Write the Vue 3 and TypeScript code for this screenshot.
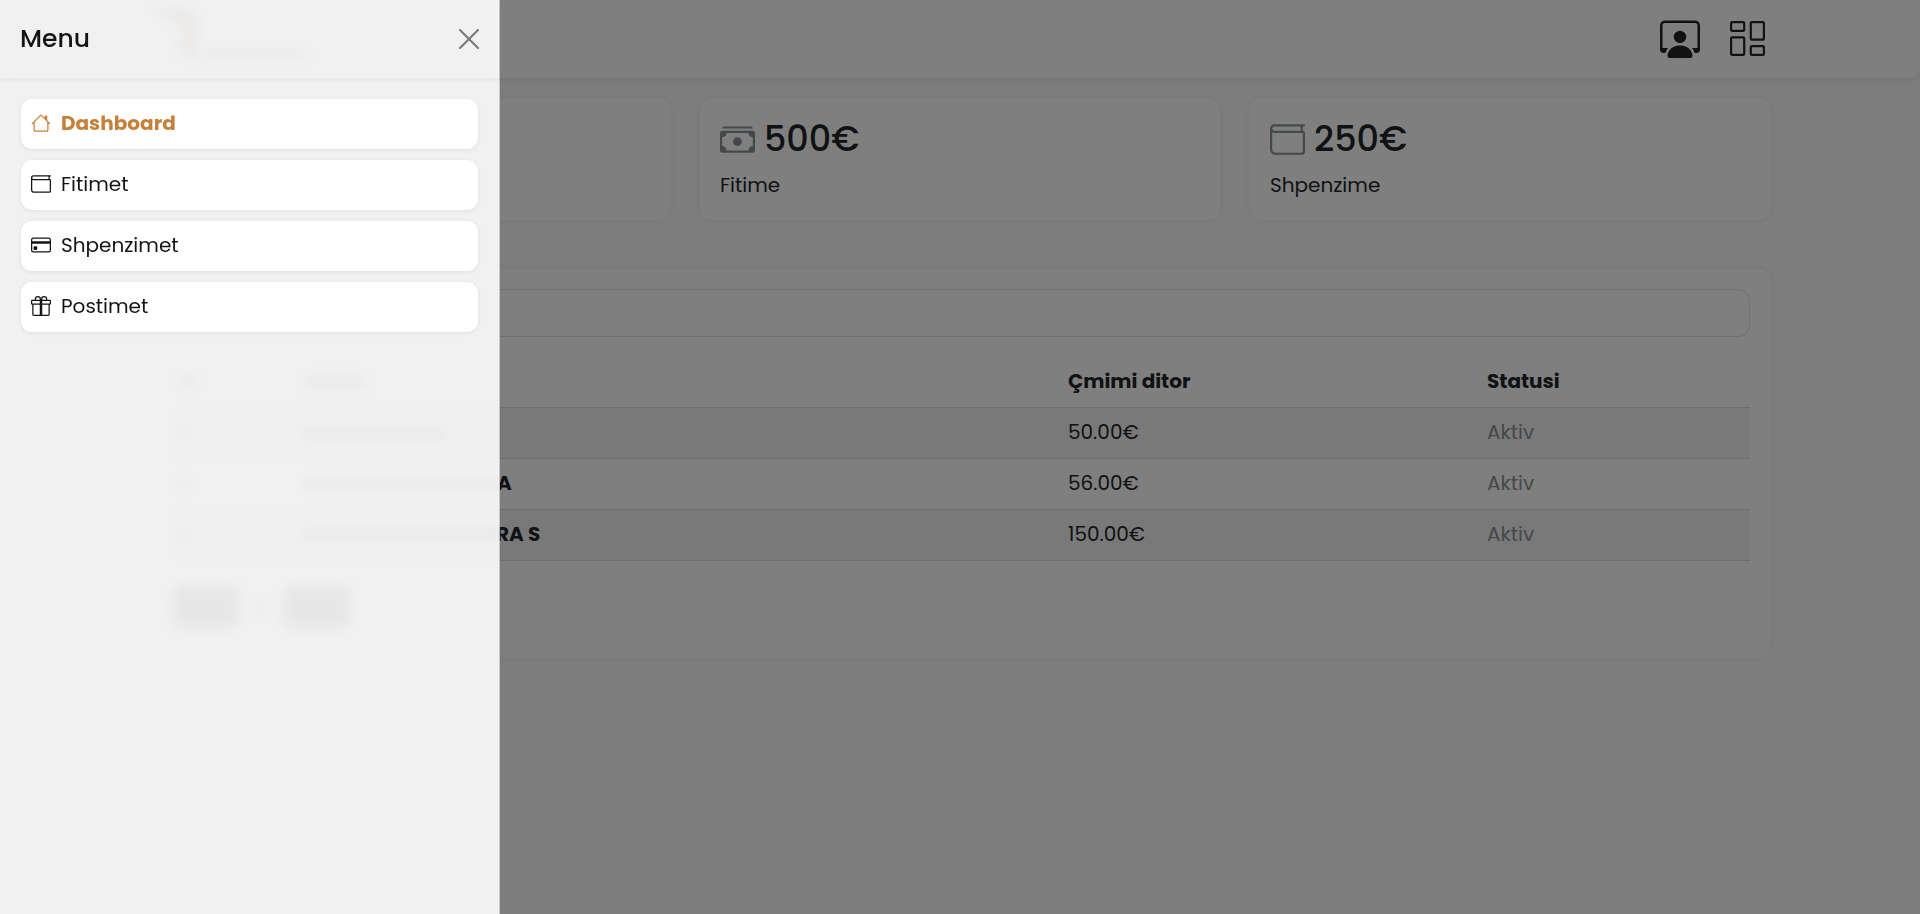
<script setup lang="ts">
import { ref } from 'vue'

interface Icon { paths: string[] }
interface MenuItem { label: string; icon: Icon; active?: boolean }
interface Stat { value: string; label: string; icon: Icon }
interface Row { id: number; bar: string; name: string; price: string; status: string }

const house: Icon = { paths: ['M8.707 1.5a1 1 0 0 0-1.414 0L.646 8.146a.5.5 0 0 0 .708.708L2 8.207V13.5A1.5 1.5 0 0 0 3.5 15h9a1.5 1.5 0 0 0 1.5-1.5V8.207l.646.647a.5.5 0 0 0 .708-.708L13 5.793V2.5a.5.5 0 0 0-.5-.5h-1a.5.5 0 0 0-.5.5v1.293L8.707 1.5ZM13 7.207V13.5a.5.5 0 0 1-.5.5h-9a.5.5 0 0 1-.5-.5V7.207l5-5 5 5Z'] }
const wallet: Icon = { paths: ['M0 3a2 2 0 0 1 2-2h13.5a.5.5 0 0 1 0 1H15v2a1 1 0 0 1 1 1v8.5a1.5 1.5 0 0 1-1.5 1.5h-12A2.5 2.5 0 0 1 0 12.5V3zm1 1.732V12.5A1.5 1.5 0 0 0 2.5 14h12a.5.5 0 0 0 .5-.5V5H2a1.99 1.99 0 0 1-1-.268zM1 3a1 1 0 0 0 1 1h12V2H2a1 1 0 0 0-1 1z'] }
const card: Icon = { paths: ['M0 4a2 2 0 0 1 2-2h12a2 2 0 0 1 2 2v8a2 2 0 0 1-2 2H2a2 2 0 0 1-2-2V4zm2-1a1 1 0 0 0-1 1v1h14V4a1 1 0 0 0-1-1H2zm13 4H1v5a1 1 0 0 0 1 1h12a1 1 0 0 0 1-1V7z', 'M2 10a1 1 0 0 1 1-1h1a1 1 0 0 1 1 1v1a1 1 0 0 1-1 1H3a1 1 0 0 1-1-1v-1z'] }
const gift: Icon = { paths: ['M3 2.5a2.5 2.5 0 0 1 5 0 2.5 2.5 0 0 1 5 0v.006c0 .07 0 .27-.038.494H15a1 1 0 0 1 1 1v2a1 1 0 0 1-1 1v7.5a1.5 1.5 0 0 1-1.5 1.5h-11A1.5 1.5 0 0 1 1 14.5V7a1 1 0 0 1-1-1V4a1 1 0 0 1 1-1h2.038A2.968 2.968 0 0 1 3 2.506V2.5zm1.068.5H7v-.5a1.5 1.5 0 1 0-3 0c0 .085.002.274.045.43a.522.522 0 0 0 .023.07zM9 3h2.932a.56.56 0 0 0 .023-.07c.043-.156.045-.345.045-.43a1.5 1.5 0 0 0-3 0V3zM1 4v2h6V4H1zm8 0v2h6V4H9zm5 3H9v8h4.5a.5.5 0 0 0 .5-.5V7zm-7 8V7H2v7.5a.5.5 0 0 0 .5.5H7z'] }
const cash: Icon = { paths: ['M1 3a1 1 0 0 1 1-1h12a1 1 0 0 1 1 1H1zm7 8a2 2 0 1 0 0-4 2 2 0 0 0 0 4z', 'M0 5a1 1 0 0 1 1-1h14a1 1 0 0 1 1 1v8a1 1 0 0 1-1 1H1a1 1 0 0 1-1-1V5zm3 0a2 2 0 0 1-2 2v4a2 2 0 0 1 2 2h10a2 2 0 0 1 2-2V7a2 2 0 0 1-2-2H3z'] }

const menu: MenuItem[] = [
  { label: 'Dashboard', icon: house, active: true },
  { label: 'Fitimet', icon: wallet },
  { label: 'Shpenzimet', icon: card },
  { label: 'Postimet', icon: gift },
]
const stats: Stat[] = [
  { value: '', label: '', icon: { paths: [] } },
  { value: '500€', label: 'Fitime', icon: cash },
  { value: '250€', label: 'Shpenzime', icon: wallet },
]
const rows: Row[] = [
  { id: 1, bar: '144px', name: '', price: '50.00€', status: 'Aktiv' },
  { id: 2, bar: '194px', name: 'A', price: '56.00€', status: 'Aktiv' },
  { id: 3, bar: '193px', name: 'RA S', price: '150.00€', status: 'Aktiv' },
]
const search = ref('')
</script>

<template>
  <div class="page">
    <header class="topbar">
      <div class="container topbar-inner">
        <svg class="logo" viewBox="0 0 160 60" aria-hidden="true">
          <path d="M0 0h36q16 10 12 30l-4 26-16-14 6-22z" />
          <path d="M52 42h104v10H52z" />
        </svg>
        <div class="actions">
          <button type="button" aria-label="Llogaria">
            <svg class="i40" viewBox="0 0 16 16">
              <path d="M4 16s-1 0-1-1 1-4 5-4 5 3 5 4-1 1-1 1H4Zm4-5.950a2.500 2.500 0 1 0 0-5 2.500 2.500 0 0 0 0 5Z" />
              <path d="M2 1a2 2 0 0 0-2 2v9.500A1.500 1.500 0 0 0 1.500 14h.653a5.373 5.373 0 0 1 1.066-2H1V3a1 1 0 0 1 1-1h12a1 1 0 0 1 1 1v9h-2.219c.554.654.89 1.373 1.066 2h.653a1.500 1.500 0 0 0 1.500-1.500V3a2 2 0 0 0-2-2H2Z" />
            </svg>
          </button>
          <button type="button" aria-label="Menu">
            <svg class="i35" viewBox="0 0 16 16">
              <path d="M6 1v3H1V1h5zM1 0a1 1 0 0 0-1 1v3a1 1 0 0 0 1 1h5a1 1 0 0 0 1-1V1a1 1 0 0 0-1-1H1zm14 12v3h-5v-3h5zm-5-1a1 1 0 0 0-1 1v3a1 1 0 0 0 1 1h5a1 1 0 0 0 1-1v-3a1 1 0 0 0-1-1h-5zM6 8v7H1V8h5zM1 7a1 1 0 0 0-1 1v7a1 1 0 0 0 1 1h5a1 1 0 0 0 1-1V8a1 1 0 0 0-1-1H1zm14-6v7h-5V1h5zm-5-1a1 1 0 0 0-1 1v7a1 1 0 0 0 1 1h5a1 1 0 0 0 1-1V1a1 1 0 0 0-1-1h-5z" />
            </svg>
          </button>
        </div>
      </div>
    </header>

    <main class="container">
      <section class="stats">
        <article v-for="(s, i) in stats" :key="i" class="panel stat">
          <div v-if="s.value" class="stat-top">
            <svg class="i35 muted" viewBox="0 0 16 16"><path v-for="p in s.icon.paths" :key="p" :d="p" /></svg>
            <span class="stat-value">{{ s.value }}</span>
          </div>
          <div class="stat-label">{{ s.label }}</div>
        </article>
      </section>

      <section class="panel listing">
        <input v-model="search" class="search" type="text" aria-label="Search" />
        <table>
          <colgroup><col class="c-id" /><col class="c-name" /><col class="c-price" /><col class="c-status" /></colgroup>
          <thead>
            <tr>
              <th scope="col"><span class="bar bar-id"></span></th>
              <th scope="col"><span class="bar bar-head"></span></th>
              <th scope="col">Çmimi ditor</th>
              <th scope="col">Statusi</th>
            </tr>
          </thead>
          <tbody>
            <tr v-for="r in rows" :key="r.id">
              <td><span class="bar bar-num"></span></td>
              <td class="name"><span class="bar" :style="{ width: r.bar }"></span>{{ r.name }}</td>
              <td>{{ r.price }}</td>
              <td class="status">{{ r.status }}</td>
            </tr>
          </tbody>
        </table>
        <nav class="pager" aria-label="Pages">
          <button type="button" aria-label="Previous page"></button>
          <span class="bar bar-num"></span>
          <button type="button" aria-label="Next page"></button>
        </nav>
      </section>
    </main>

    <div class="backdrop"></div>

    <aside class="drawer" role="dialog" aria-labelledby="drawer-title">
      <div class="drawer-head">
        <h5 id="drawer-title">Menu</h5>
        <button type="button" class="close" aria-label="Close">
          <svg viewBox="0 0 20 20"><path d="M1 1l18 18M19 1L1 19" /></svg>
        </button>
      </div>
      <nav class="drawer-body">
        <a v-for="m in menu" :key="m.label" href="#" class="item" :class="{ active: m.active }">
          <svg class="i20" viewBox="0 0 16 16"><path v-for="p in m.icon.paths" :key="p" :d="p" /></svg>
          <span>{{ m.label }}</span>
        </a>
      </nav>
    </aside>
  </div>
</template>

<style>
body { margin: 0; }
</style>

<style scoped>
* { box-sizing: border-box; }
.page {
  min-height: 100vh;
  background: #fafafa;
  color: #212529;
  font-family: Poppins, Inter, "Open Sans", sans-serif;
  font-size: 20px;
  line-height: 30px;
}
svg { display: block; fill: currentColor; }
button { padding: 0; border: 0; background: none; color: inherit; font: inherit; }
.container { width: 100%; max-width: 1650px; margin: 0 auto; padding: 0 15px; }
.topbar { background: #fff; border-radius: 0 0 10px 10px; box-shadow: 0 2px 5px rgba(0, 0, 0, 0.08); }
.topbar-inner { display: flex; align-items: center; justify-content: space-between; height: 78px; padding-bottom: 2px; }
.logo { width: 160px; height: 60px; fill: #a58468; }
.actions { display: flex; align-items: center; gap: 30px; padding-right: 5px; }
.i40 { width: 40px; height: 40px; }
.i35 { width: 35px; height: 35px; }
.i20 { width: 20px; height: 20px; }
.muted { color: #869197; }
.panel { background: #fff; border-radius: 12px; box-shadow: 0 0 6px rgba(0, 0, 0, 0.06); }
.stats { display: grid; grid-template-columns: repeat(3, 1fr); gap: 30px; margin-top: 20px; }
.stat { min-height: 122px; padding: 20px; }
.stat-top { display: flex; align-items: center; gap: 9px; height: 42px; margin-bottom: 10px; }
.stat-value { font-size: 35px; font-weight: 500; line-height: 42px; }
.listing { margin-top: 49px; padding: 20px 20px 30px; }
.search { display: block; width: 100%; height: 48px; padding: 0 15px; border: 1px solid #dee2e6; border-radius: 12px; background: #fff; font: inherit; }
table { width: 100%; margin-top: 19px; border-collapse: collapse; table-layout: fixed; }
.c-id { width: 123px; }
.c-name { width: 765px; }
.c-price { width: 419px; }
th, td { height: 51px; padding: 10px; border-bottom: 1px solid #d8dcdf; text-align: left; white-space: nowrap; }
th { font-weight: 700; }
td { padding: 9px 10px 11px; font-weight: 400; }
tbody tr:nth-child(odd) { background: #f2f2f2; }
.name { font-weight: 700; }
.status { color: #869197; }
.bar { display: inline-block; height: 12px; background: #858583; }
.bar-id { width: 18px; }
.bar-head { width: 64px; }
.bar-num { width: 9px; }
.pager { display: flex; align-items: center; gap: 18px; margin-top: 25px; padding-left: 3px; }
.pager button { width: 66px; height: 42px; border-radius: 8px; background: #4b4f52; }
.backdrop { position: fixed; inset: 0; background: rgba(0, 0, 0, 0.5); }
.drawer {
  position: fixed;
  inset: 0 auto 0 0;
  width: 500px;
  max-width: 100%;
  border-right: 1px solid rgba(0, 0, 0, 0.175);
  background: rgba(255, 255, 255, 0.89);
  backdrop-filter: blur(6px);
  color: #141414;
}
.drawer-head { display: flex; align-items: center; justify-content: space-between; height: 78px; padding: 0 20px; box-shadow: 0 2px 4px rgba(0, 0, 0, 0.06); }
h5 { margin: 0; font-size: 25px; font-weight: 500; }
.close svg { width: 20px; height: 20px; fill: none; stroke: #777; stroke-width: 2; stroke-linecap: round; }
.drawer-body { display: flex; flex-direction: column; gap: 11px; padding: 21px; }
.item {
  display: flex;
  align-items: center;
  gap: 10px;
  height: 50px;
  padding: 0 10px 2px;
  border-radius: 11px;
  background: #fff;
  box-shadow: 0 1px 4px rgba(0, 0, 0, 0.08);
  color: inherit;
  text-decoration: none;
}
.item.active { color: #c5803a; font-weight: 700; }
</style>
